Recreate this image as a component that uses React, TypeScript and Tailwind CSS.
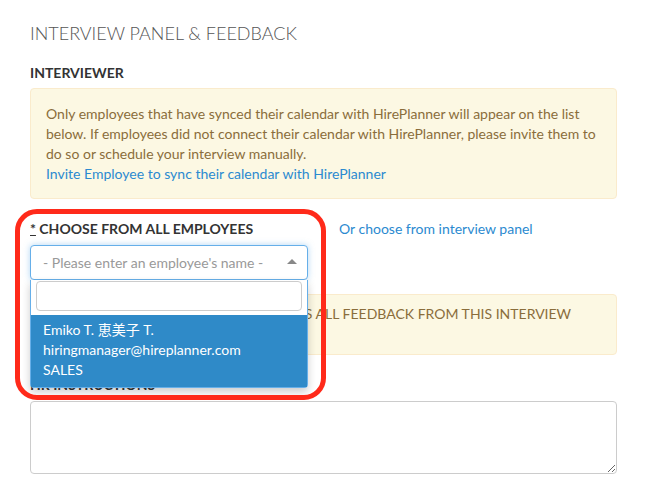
import React from 'react';

const font = { fontFamily: 'Lato, "Noto Sans CJK JP", sans-serif' };

function EmployeeSelect() {
  return (
    <div className="relative mt-[6px] w-[278px]">
      <div className="flex h-[35px] items-center justify-between rounded-[4px] border border-[#66afe9] bg-white pl-[12px] pr-[10px] text-[#999] shadow-[0_0_6px_rgba(102,175,233,0.5)]">
        <span>- Please enter an employee's name -</span>
        <span className="mb-[2px] h-0 w-0 border-x-[5px] border-b-[5px] border-x-transparent border-b-[#888]" />
      </div>
      {/* open dropdown */}
      <div className="absolute left-0 top-[35px] z-10 w-[278px] rounded-b-[4px] border border-t-0 border-[#66afe9] bg-white shadow-[0_4px_8px_rgba(0,0,0,0.2)]">
        <div className="px-[5px] pt-[1px] pb-[4px]">
          <input className="h-[30px] w-full rounded-[4px] border border-[#ccc] px-2 outline-none" />
        </div>
        <div className="bg-[#2f8ac8] px-[12px] pt-[5px] pb-[7px] leading-[20px] text-white">
          <div>Emiko T. 恵美子 T.</div>
          <div>hiringmanager@hireplanner.com</div>
          <div>SALES</div>
        </div>
      </div>
    </div>
  );
}

export default function App() {
  return (
    <div className="relative min-h-screen bg-white px-[30px] pt-[23px] text-[14px] leading-[20px]" style={font}>
      <h2 className="text-[18px] font-light leading-[20px] text-[#555]">INTERVIEW PANEL &amp; FEEDBACK</h2>

      <div className="mt-[20px] font-bold text-[#333]">INTERVIEWER</div>
      <div className="mt-[5px] w-[587px] rounded-[4px] border border-[#faebcc] bg-[#fcf8e3] px-[15px] pt-[15px] pb-[14px] text-[#8a6d3b]">
        <p>
          Only employees that have synced their calendar with HirePlanner will appear on the list below. If employees did not
          connect their calendar with HirePlanner, please invite them to do so or schedule your interview manually.
        </p>
        <a className="text-[#2b8ad0]">Invite Employee to sync their calendar with HirePlanner</a>
      </div>

      <div className="mt-[20px] flex">
        <div className="w-[309px] font-bold text-[#333]">
          <span className="underline">*</span> CHOOSE FROM ALL EMPLOYEES
        </div>
        <a className="text-[#2b8ad0]">Or choose from interview panel</a>
      </div>
      <EmployeeSelect />

      <div className="mt-[14px] h-[61px] w-[587px] rounded-[4px] border border-[#faebcc] bg-[#fcf8e3] pl-[15px] pt-[9px] text-[#8a6d3b]">
        <label className="flex items-center gap-[14px]">
          <input type="checkbox" className="h-[13px] w-[13px]" />
          INTERVIEWERS VIEW AND RECEIVES ALL FEEDBACK FROM THIS INTERVIEW
        </label>
      </div>

      <div className="mt-[20px] font-bold text-[#333]">HR INSTRUCTIONS</div>
      <textarea className="mt-[6px] block h-[73px] w-[587px] rounded-[4px] border border-[#ccc] outline-none" />

      {/* annotation outline */}
      <div className="pointer-events-none absolute left-[15px] top-[209px] z-20 h-[191px] w-[311px] rounded-[22px] border-[5px] border-[#ff2a1a]" />
    </div>
  );
}
